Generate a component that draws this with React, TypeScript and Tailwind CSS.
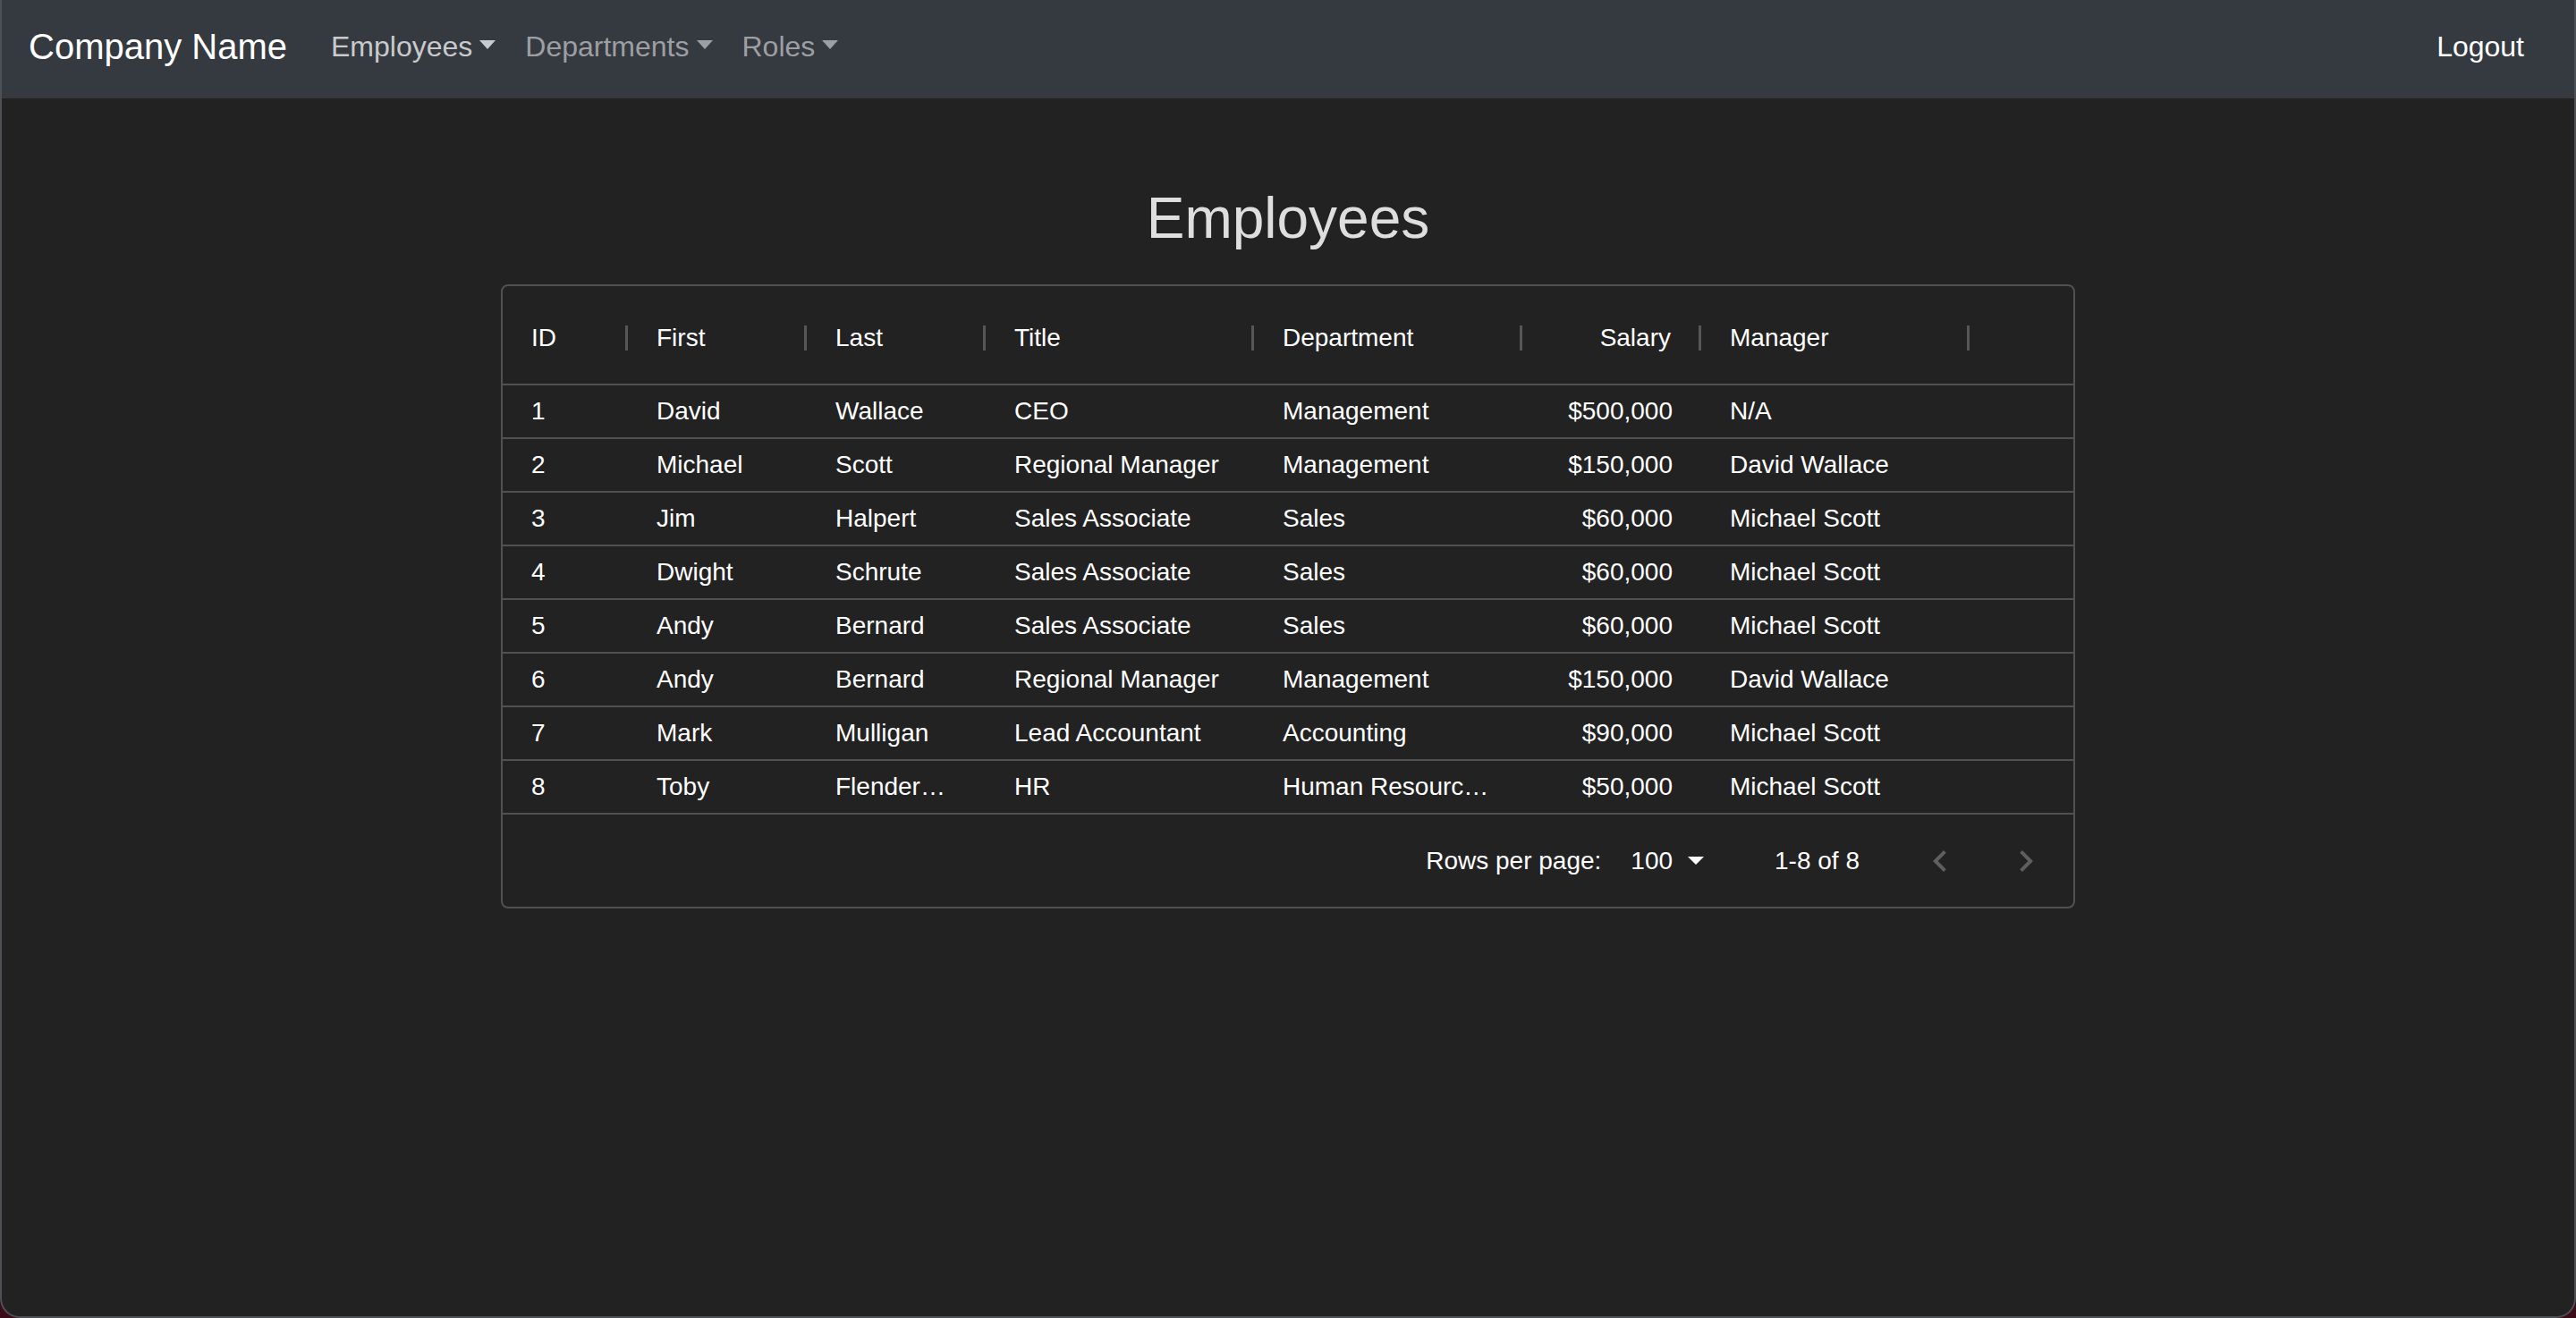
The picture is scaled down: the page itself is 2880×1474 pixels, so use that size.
import React from "react";

type Row = {
  id: number;
  first: string;
  last: string;
  title: string;
  dept: string;
  salary: string;
  manager: string;
};

const rows: Row[] = [
  { id: 1, first: "David", last: "Wallace", title: "CEO", dept: "Management", salary: "$500,000", manager: "N/A" },
  { id: 2, first: "Michael", last: "Scott", title: "Regional Manager", dept: "Management", salary: "$150,000", manager: "David Wallace" },
  { id: 3, first: "Jim", last: "Halpert", title: "Sales Associate", dept: "Sales", salary: "$60,000", manager: "Michael Scott" },
  { id: 4, first: "Dwight", last: "Schrute", title: "Sales Associate", dept: "Sales", salary: "$60,000", manager: "Michael Scott" },
  { id: 5, first: "Andy", last: "Bernard", title: "Sales Associate", dept: "Sales", salary: "$60,000", manager: "Michael Scott" },
  { id: 6, first: "Andy", last: "Bernard", title: "Regional Manager", dept: "Management", salary: "$150,000", manager: "David Wallace" },
  { id: 7, first: "Mark", last: "Mulligan", title: "Lead Accountant", dept: "Accounting", salary: "$90,000", manager: "Michael Scott" },
  { id: 8, first: "Toby", last: "Flender\u2026", title: "HR", dept: "Human Resourc\u2026", salary: "$50,000", manager: "Michael Scott" },
];

function Caret() {
  return (
    <span className="ml-[8px] inline-block align-[0.255em] border-t-[10px] border-x-[9.5px] border-x-transparent border-t-current" />
  );
}

function HeaderCell({ label, w, right }: { label: string; w: string; right?: boolean }) {
  return (
    <div className={`flex items-center pl-[32px] ${w}`}>
      <span className={`flex-1 truncate ${right ? "text-right pr-[31px]" : ""}`}>{label}</span>
      <span className="w-[3px] h-[28px] bg-[#575757]" />
    </div>
  );
}

export default function App() {
  return (
    <div className="bg-[#3a0c18] min-h-[1474px]">
      <div className="h-[1474px] bg-[#222222] border-x-2 border-b-2 border-[#4d5054] rounded-b-[22px] overflow-hidden flex flex-col font-['Liberation_Sans',Arial,Helvetica,sans-serif]">
        <nav className="h-[110px] shrink-0 bg-[#343a40] flex items-center pb-[6px] pl-[30px] pr-[56px]">
          <span className="text-[40px] leading-[60px] text-white">Company Name</span>
          <div className="ml-[49px] flex items-center gap-[33px] text-[32px] leading-[48px]">
            <span className="text-[#c8cacc]">
              Employees
              <Caret />
            </span>
            <span className="text-[#9d9fa2]">
              Departments
              <Caret />
            </span>
            <span className="text-[#9d9fa2]">
              Roles
              <Caret />
            </span>
          </div>
          <span className="ml-auto text-[32px] leading-[48px] text-white">Logout</span>
        </nav>

        <main className="flex flex-col items-center">
          <h1 className="mt-[96px] mb-[35px] text-[64px] leading-[77px] font-normal text-[#dedede]">Employees</h1>

          <div className="w-[1760px] border-2 border-[#515151] rounded-[8px] text-[28px] text-white">
            <div className="flex h-[111px] pt-[6px] border-b-2 border-[#515151]">
              <HeaderCell label="ID" w="w-[140px]" />
              <HeaderCell label="First" w="w-[200px]" />
              <HeaderCell label="Last" w="w-[200px]" />
              <HeaderCell label="Title" w="w-[300px]" />
              <HeaderCell label="Department" w="w-[300px]" />
              <HeaderCell label="Salary" w="w-[200px]" right />
              <HeaderCell label="Manager" w="w-[300px]" />
              <div className="flex-1" />
            </div>

            {rows.map((r) => (
              <div key={r.id} className="flex h-[60px] border-b-2 border-[#515151]">
                <div className="w-[140px] px-[32px] flex items-center truncate">{r.id}</div>
                <div className="w-[200px] px-[32px] flex items-center truncate">{r.first}</div>
                <div className="w-[200px] px-[32px] flex items-center truncate">{r.last}</div>
                <div className="w-[300px] px-[32px] flex items-center truncate">{r.title}</div>
                <div className="w-[300px] px-[32px] flex items-center truncate">{r.dept}</div>
                <div className="w-[200px] px-[32px] flex items-center justify-end truncate">{r.salary}</div>
                <div className="w-[300px] px-[32px] flex items-center truncate">{r.manager}</div>
                <div className="flex-1" />
              </div>
            ))}

            <div className="h-[103px] flex items-center justify-end pr-[29px]">
              <span>Rows per page:</span>
              <span className="ml-[33px]">100</span>
              <svg className="ml-[17px]" width="18" height="9" viewBox="0 0 18 9">
                <polygon points="0,0 18,0 9,9" fill="#ffffff" />
              </svg>
              <span className="ml-[79px]">1-8 of 8</span>
              <svg className="ml-[66px]" width="48" height="48" viewBox="0 0 24 24">
                <path d="M15.41 7.41 14 6l-6 6 6 6 1.41-1.41L10.83 12z" fill="#5f5f5f" />
              </svg>
              <svg className="ml-[48px]" width="48" height="48" viewBox="0 0 24 24">
                <path d="M10 6 8.59 7.41 13.17 12l-4.58 4.59L10 18l6-6z" fill="#5f5f5f" />
              </svg>
            </div>
          </div>
        </main>
      </div>
    </div>
  );
}
